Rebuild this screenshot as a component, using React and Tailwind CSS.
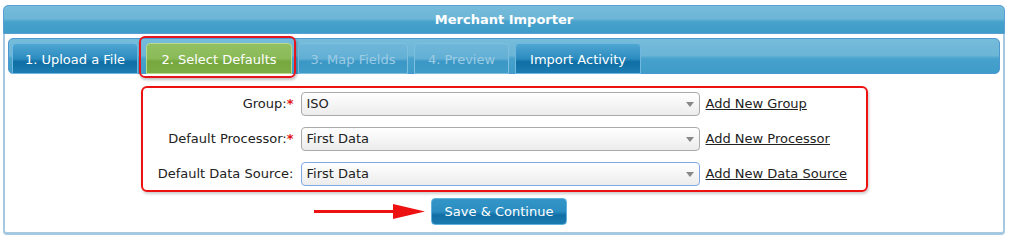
const blueBar =
  "bg-[linear-gradient(to_bottom,#76bcdb_0%,#6cb5d6_48%,#47a2cc_58%,#3e9cc8_100%)]";
const darkTab =
  "bg-[linear-gradient(to_bottom,#4fa6d2_0%,#2c8cc0_50%,#0f6fa5_62%,#1c7db2_100%)] text-white";
const greenTab =
  "bg-[linear-gradient(to_bottom,#93c162_0%,#8aba58_50%,#76a83f_60%,#7cad45_100%)] text-white border border-[#b9d98f]";
const offTab =
  "bg-[linear-gradient(to_bottom,#6fb7d9_0%,#62afd5_50%,#3b98c6_60%,#3f9cc8_100%)] text-[#9ccbe4] border border-[#7ebfdf]";

function Tab({ cls, children, w }) {
  return (
    <div
      className={`${cls} ${w} h-[31px] pt-[2px] rounded-t-[4px] flex items-center justify-center text-[13px] shrink-0`}
    >
      {children}
    </div>
  );
}

function Row({ label, req, value, focus, link }) {
  return (
    <div className="flex items-center h-[24px]">
      <div className="w-[152px] text-right text-[13px] text-[#222] pr-[1px]">
        {label}
        {req && <span className="text-[#e01010] font-bold">*</span>}
      </div>
      <div
        className={`ml-[6px] w-[399px] h-[24px] rounded-[4px] border ${
          focus ? "border-[#7fa9e6]" : "border-[#aaaaaa]"
        } bg-[linear-gradient(to_bottom,#ffffff,#ececec)] flex items-center justify-between pl-[5px] pr-[5px]`}
      >
        <span className="text-[13px] text-[#222]">{value}</span>
        <svg width="8" height="5" viewBox="0 0 8 5">
          <path d="M0 0 L8 0 L4 5 Z" fill="#888" />
        </svg>
      </div>
      <a className="ml-[6px] text-[13px] text-[#222] underline">{link}</a>
    </div>
  );
}

export default function App() {
  return (
    <div
      className="w-[1012px] h-[241px] bg-white pt-[5px] pl-[3px]"
      style={{ fontFamily: '"DejaVu Sans", Verdana, sans-serif' }}
    >
      <div className="w-[1002px]">
        <div
          className={`${blueBar} h-[29px] rounded-t-[5px] border border-[#5a9fd4] flex items-center justify-center text-white font-bold text-[13px]`}
        >
          Merchant Importer
        </div>
        <div className="border-x-2 border-b-[3px] border-[#a6c8e1] rounded-b-[4px] px-[3px] pt-[4px] h-[201px]">
          <div
            className={`${blueBar} h-[36px] rounded-[5px] border border-[#4d97d3] flex items-end pl-[3px]`}
          >
            <div className="flex gap-[6px] items-end mb-[-1px]">
              <Tab cls={`${darkTab} border border-[#6fb9e0]`} w="w-[126px]">
                1. Upload a File
              </Tab>
              <div className="relative ml-[2px]">
                <Tab cls={greenTab} w="w-[146px]">
                  2. Select Defaults
                </Tab>
                <div className="absolute left-[-7px] top-[-7px] right-[-4px] bottom-[-4px] border-2 border-[#e8141c] rounded-[6px] shadow-[1px_2px_3px_rgba(0,0,0,0.25)]" />
              </div>
              <Tab cls={offTab} w="w-[110px]">
                3. Map Fields
              </Tab>
              <Tab cls={offTab} w="w-[95px]">
                4. Preview
              </Tab>
              <Tab cls={`${darkTab} border border-[#6fb9e0]`} w="w-[126px]">
                Import Activity
              </Tab>
            </div>
          </div>

          <div className="flex justify-center mt-[12px]">
            <div className="w-[727px] h-[106px] border-2 border-[#ee1111] rounded-[6px] shadow-[1px_2px_3px_rgba(0,0,0,0.2)] pt-[4px] flex flex-col gap-[11px]">
              <Row label="Group:" req value="ISO" link="Add New Group" />
              <Row
                label="Default Processor:"
                req
                value="First Data"
                link="Add New Processor"
              />
              <Row
                label="Default Data Source:"
                value="First Data"
                focus
                link="Add New Data Source"
              />
            </div>
          </div>

          <div className="flex justify-center pr-[10px] mt-[6px]">
            <div className="relative">
              <svg
                className="absolute left-[-118px] top-[4px]"
                width="116"
                height="20"
                viewBox="0 0 116 20"
              >
                <path d="M1 8 L82 8 L82 11 L1 11 Z" fill="#ee1111" />
                <path d="M80 2 L112 9.5 L80 17 Z" fill="#ee1111" />
              </svg>
              <button className="w-[136px] h-[27px] rounded-[4px] border border-[#62b0dc] bg-[linear-gradient(to_bottom,#3396c8_0%,#2a8cc0_50%,#126fa5_65%,#1a7ab0_100%)] text-white text-[13px]">
                Save &amp; Continue
              </button>
            </div>
          </div>
        </div>
      </div>
    </div>
  );
}
